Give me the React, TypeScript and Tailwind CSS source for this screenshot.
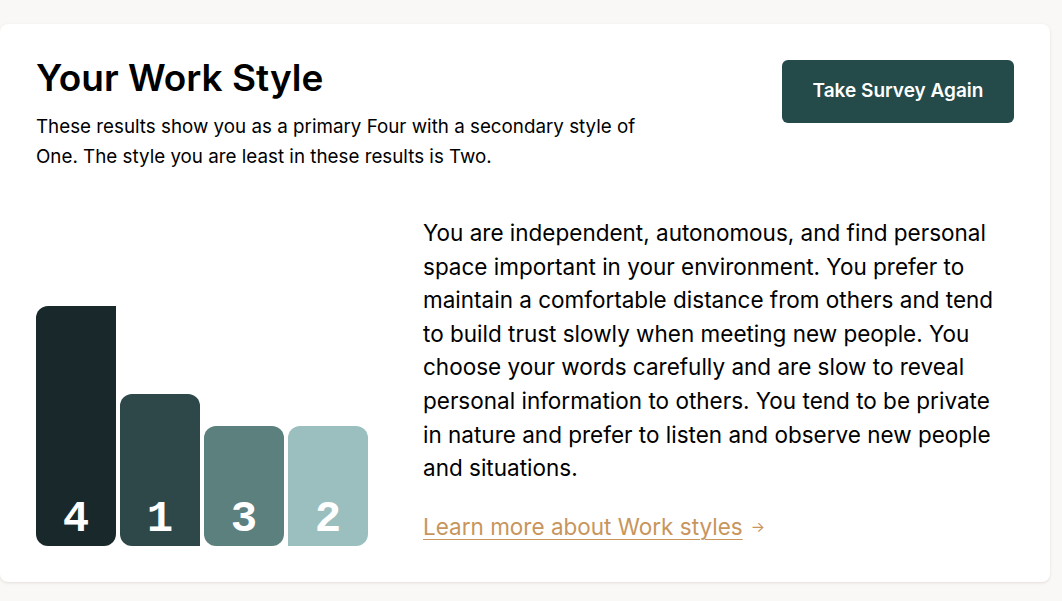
const bars = [
  { n: "4", h: "h-[240px]", bg: "bg-[#19292b]", r: "rounded-tl-xl rounded-b-xl" },
  { n: "1", h: "h-[152px]", bg: "bg-[#2e4849]", r: "rounded-t-xl rounded-bl-xl" },
  { n: "3", h: "h-[120px]", bg: "bg-[#5c807e]", r: "rounded-xl" },
  { n: "2", h: "h-[120px]", bg: "bg-[#9bbfbf]", r: "rounded-t-xl rounded-br-xl" },
];

export default function App() {
  return (
    <div className="min-h-[601px] bg-[#faf8f6] pt-6 font-['Inter',sans-serif] text-black">
      <div className="w-[1050px] rounded-lg bg-white px-9 pt-8 pb-9 shadow-[0_1px_3px_rgba(120,100,90,0.18)]">
        <div className="flex items-start justify-between">
          <div>
            <h1 className="text-[37px] font-semibold leading-[44px]">Your Work Style</h1>
            <p className="mt-3 w-[640px] text-[18.8px] leading-[30px]">
              These results show you as a primary Four with a secondary style of One. The style you are least in these results is Two.
            </p>
          </div>
          <button className="mt-1 h-[63px] w-[232px] rounded-md bg-[#244a4a] text-[19px] font-semibold text-white">
            Take Survey Again
          </button>
        </div>

        <div className="mt-[44px] flex items-end">
          <div className="flex w-[387px] items-end gap-1">
            {bars.map((b) => (
              <div
                key={b.n}
                className={`flex w-20 items-end justify-center pb-[2px] ${b.h} ${b.bg} ${b.r}`}
              >
                <span className="font-['Liberation_Mono',monospace] text-[44px] font-bold leading-[50px] text-white">{b.n}</span>
              </div>
            ))}
          </div>
          <div className="w-[585px] pb-[2px]">
            <p className="text-[22.5px] leading-[33.6px]">
              You are independent, autonomous, and find personal space important in your environment. You prefer to maintain a comfortable distance from others and tend to build trust slowly when meeting new people. You choose your words carefully and are slow to reveal personal information to others. You tend to be private in nature and prefer to listen and observe new people and situations.
            </p>
            <a href="#" className="mt-[25px] flex items-center gap-2 text-[22.5px] leading-[34px] text-[#c8955c]">
              <span className="underline decoration-1 underline-offset-4">Learn more about Work styles</span>
              <span className="text-[15px]">→</span>
            </a>
          </div>
        </div>
      </div>
    </div>
  );
}
